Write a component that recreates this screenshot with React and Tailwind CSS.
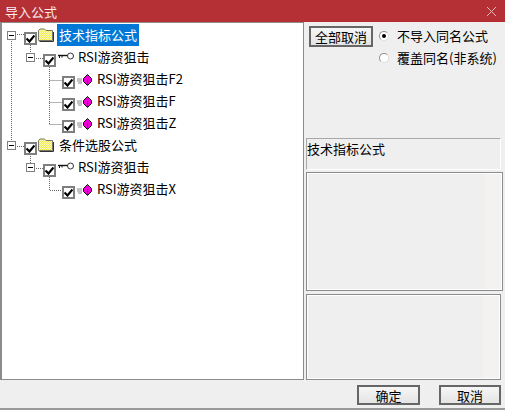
const FONT = 'font-["Noto_Sans_CJK_SC","Liberation_Sans",sans-serif]';

function Check() {
  return (
    <span className="w-[13px] h-[13px] shrink-0 border-2 border-[#7f7f7f] bg-white flex items-center justify-center">
      <svg width="9" height="9" viewBox="0 0 9 9"><path d="M0.5 4.5 L3.5 7.5 L8.5 1.5" fill="none" stroke="#000" strokeWidth="2.2" /></svg>
    </span>
  );
}

function Expander() {
  return (
    <span className="w-[9px] h-[9px] mr-[8px] shrink-0 border border-[#808080] bg-white flex items-center justify-center">
      <span className="block w-[5px] h-px bg-black" />
    </span>
  );
}

function Folder() {
  return (
    <svg width="16" height="14" viewBox="0 0 16 14" className="shrink-0">
      <defs>
        <pattern id="mesh" width="2" height="2" patternUnits="userSpaceOnUse">
          <rect width="2" height="2" fill="#f0ea50" />
          <rect width="1" height="1" fill="#fbfbc0" />
          <rect x="1" y="1" width="1" height="1" fill="#fbfbc0" />
        </pattern>
      </defs>
      <path d="M0.5 12.5 V2.5 L2 1 H6.5 L8 2.5 H14.5 V12.5 Z" fill="url(#mesh)" stroke="#77776a" />
      <path d="M1.5 13.5 H15.5 V4" fill="none" stroke="#333" />
    </svg>
  );
}

function Key() {
  return (
    <svg width="16" height="9" viewBox="0 0 16 9" className="shrink-0">
      <path d="M0 3.5 H10" stroke="#111" strokeWidth="1.4" />
      <path d="M1.5 3.5 V6 M4 3.5 V5.5" stroke="#111" />
      <circle cx="12.5" cy="4" r="3" fill="#fff" stroke="#333" />
    </svg>
  );
}

function Gem() {
  return (
    <svg width="16" height="12" viewBox="0 0 16 12" className="shrink-0">
      <path d="M0 5 H5 M0 7 H5 M1 9 H5" stroke="#8a8a8a" />
      <path d="M10.5 0.5 L14.5 4.5 V7.5 L10.5 11.5 L6.5 7.5 V4.5 Z" fill="#f000d8" stroke="#111" />
      <path d="M10.5 5.5 V11" stroke="#90007f" />
    </svg>
  );
}

function Row({ level, expander, icon, selected, children }) {
  const pad = level === 0 ? 'pl-[5px]' : level === 1 ? 'pl-[24px]' : 'pl-[60px]';
  const iconBox = level === 0 ? 'ml-px w-[19px]' : 'ml-[2px] w-[18px]';
  return (
    <div className={`h-[22px] flex items-center ${pad}`}>
      {expander ? <Expander /> : null}
      <span className="mt-[6px] flex"><Check /></span>
      <span className={`flex ${iconBox}`}>{icon}</span>
      <span className={`text-[13px] leading-[22px] h-[22px] px-[2px] whitespace-nowrap ${selected ? 'bg-[#0078d7] text-white' : 'text-black'}`}>{children}</span>
    </div>
  );
}

function TreeLines() {
  const d = 'M11.5 39 V142 M17 34.5 H24 M30.5 45 V55 M36 58.5 H43 ' +
    'M49.5 67 V124.5 M49.5 80.5 H62 M49.5 102.5 H62 M49.5 124.5 H62 ' +
    'M17 146.5 H24 M30.5 156 V165 M36 168.5 H43 M49.5 177 V190.5 H62';
  return (
    <svg width="100" height="220" className="absolute left-[-2px] top-[-1px] -mt-[22px] pointer-events-none">
      <path d={d} fill="none" stroke="#666" strokeDasharray="1 1" />
    </svg>
  );
}

function Button({ className, children }) {
  return (
    <button className={`border-2 border-[#666] bg-gradient-to-b from-[#f6f6f6] to-[#e4e4e4] text-[13px] leading-none text-black ${className}`}>
      {children}
    </button>
  );
}

function Radio({ checked, children }) {
  return (
    <div className="h-[22px] flex items-center gap-[8px]">
      <span className="w-[10px] h-[10px] rounded-full bg-white border border-[#8f8f8f] border-r-[#dddddd] border-b-[#dddddd] flex items-center justify-center shrink-0">
        {checked ? <span className="block w-[4px] h-[4px] rounded-full bg-black" /> : null}
      </span>
      <span className="text-[13px] text-black whitespace-nowrap">{children}</span>
    </div>
  );
}

function Box({ className }) {
  return (
    <div className={`border border-[#8c8c8c] ${className}`}>
      <div className="h-full border border-white bg-[#efefef]">
        <div className="h-full ml-auto w-[16px] bg-[#f3f2f0]" />
      </div>
    </div>
  );
}

export default function App() {
  return (
    <div className={`w-[505px] h-[410px] bg-[#efefef] flex flex-col overflow-hidden border-b-2 border-[#9a9a9a] ${FONT}`}>
      <div className="h-[22px] shrink-0 bg-[#b43035] flex items-center justify-between pl-[5px] pr-[8px]">
        <span className="text-[13px] text-white/90 leading-none">导入公式</span>
        <svg width="11" height="11" viewBox="0 0 11 11"><path d="M1 1 L10 10 M10 1 L1 10" stroke="#e8b8ba" /></svg>
      </div>
      <div className="h-[358px] shrink-0 flex">
        <div className="relative w-[304px] shrink-0 bg-white border-l-2 border-r border-t border-b border-[#8c8c8c] pt-px overflow-hidden">
          <TreeLines />
          <div className="relative">
            <Row level={0} expander icon={<Folder />} selected>技术指标公式</Row>
            <Row level={1} expander icon={<span className="mb-[2px] flex"><Key /></span>}>RSI游资狙击</Row>
            <Row level={2} icon={<span className="mt-[2px] flex"><Gem /></span>}>RSI游资狙击F2</Row>
            <Row level={2} icon={<span className="mt-[2px] flex"><Gem /></span>}>RSI游资狙击F</Row>
            <Row level={2} icon={<span className="mt-[2px] flex"><Gem /></span>}>RSI游资狙击Z</Row>
            <Row level={0} expander icon={<Folder />}>条件选股公式</Row>
            <Row level={1} expander icon={<span className="mb-[2px] flex"><Key /></span>}>RSI游资狙击</Row>
            <Row level={2} icon={<span className="mt-[2px] flex"><Gem /></span>}>RSI游资狙击X</Row>
          </div>
        </div>
        <div className="flex-1 flex flex-col pl-[2px]">
          <div className="h-[116px] shrink-0 flex pt-[3px] pl-[3px] gap-[6px]">
            <Button className="w-[64px] h-[21px] mt-px">全部取消</Button>
            <div className="flex flex-col">
              <Radio checked>不导入同名公式</Radio>
              <Radio>覆盖同名(非系统)</Radio>
            </div>
          </div>
          <div className="w-[195px] h-[32px] shrink-0 border border-[#a8a8a8] border-r-white border-b-white text-[13px] leading-[20px] text-black">技术指标公式</div>
          <Box className="w-[197px] h-[119px] mt-[2px] shrink-0" />
          <Box className="w-[195px] h-[86px] mt-[3px] shrink-0" />
        </div>
      </div>
      <div className="flex-1 flex justify-end items-start gap-[19px] pt-[5px] pr-[4px]">
        <Button className="w-[63px] h-[20px]">确定</Button>
        <Button className="w-[62px] h-[20px]">取消</Button>
      </div>
    </div>
  );
}
